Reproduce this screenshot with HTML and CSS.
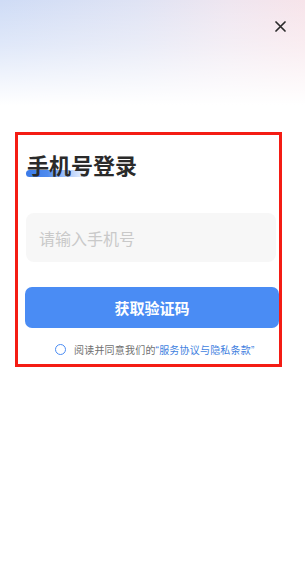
FILE: index.html
```html
<!DOCTYPE html>
<html lang="zh">
<head>
<meta charset="utf-8">
<link rel="stylesheet" href="styles.css">
</head>
<body>
<div class="page">
  <div class="top">
    <button class="close" aria-label="关闭">
      <svg width="11" height="11" viewBox="0 0 11 11"><path d="M1 1 L10 10 M10 1 L1 10" stroke="#2b2b2b" stroke-width="1.7" stroke-linecap="round"/></svg>
    </button>
  </div>
  <div class="box">
    <h1 class="title"><span class="title-text">手机号登录</span></h1>
    <div class="input">请输入手机号</div>
    <button class="btn">获取验证码</button>
    <div class="agree">
      <span class="radio"></span>
      <span class="agree-text">阅读并同意我们的<span class="link"><span class="q">“</span>服务协议与隐私条款<span class="q">”</span></span></span>
    </div>
  </div>
</div>
</body>
</html>
```
FILE: styles.css
```css
* { box-sizing: border-box; }
html, body { margin: 0; padding: 0; }
body {
  width: 305px;
  height: 566px;
  font-family: "Noto Sans CJK SC", "Noto Sans", sans-serif;
  background:
    linear-gradient(to bottom, rgba(255,255,255,0) 0px, rgba(255,255,255,0.35) 45px, #fff 105px),
    linear-gradient(to right, #cfdcf6 0%, #dfe3f4 45%, #efe6f0 75%, #f7e4ea 100%);
  background-size: 100% 120px, 100% 120px;
  background-repeat: no-repeat;
  background-color: #fff;
}
.top {
  height: 132px;
  display: flex;
  justify-content: flex-end;
  align-items: flex-start;
  padding: 21px 19px 0 0;
}
.close {
  border: 0;
  background: none;
  padding: 0;
  width: 11px;
  height: 11px;
  display: block;
}
.close svg { display: block; }
.box {
  margin: 0 23px 0 15px;
  border: 3px solid #f41c14;
  padding: 14px 0 8px 0;
}
.title {
  margin: 0 0 0 9px;
  font-size: 22px;
  line-height: 30px;
  font-weight: 700;
  color: #2a2a2a;
}
.title-text {
  position: relative;
  display: inline-block;
  z-index: 0;
}
.title-text::before {
  content: "";
  position: absolute;
  left: -1px;
  top: 21px;
  width: 62px;
  height: 7px;
  border-radius: 4px 1px 1px 4px;
  background: linear-gradient(to right, #3a7ae8 0%, #4f8bee 35%, rgba(130,172,246,0.6) 70%, rgba(220,232,252,0.2) 100%);
  z-index: -1;
}
.input {
  margin: 34px 3px 0 8px;
  height: 49px;
  background: #f7f7f7;
  border-radius: 8px;
  padding-left: 13px;
  display: flex;
  align-items: center;
  font-size: 16px;
  color: #c9c9c9;
}
.btn {
  display: block;
  margin: 25px 0 0 7px;
  width: calc(100% - 7px);
  height: 41px;
  border: 0;
  border-radius: 7px;
  background: #4a8cf4;
  color: #fff;
  font-family: inherit;
  font-size: 15px;
  font-weight: 700;
}
.agree {
  margin: 14px 0 0 37px;
  display: flex;
  align-items: center;
  height: 14px;
}
.radio {
  width: 11px;
  height: 11px;
  border: 1.3px solid #4a8cf4;
  border-radius: 50%;
  margin-right: 8px;
  flex: none;
}
.agree-text {
  font-size: 10px;
  color: #707070;
  white-space: nowrap;
  letter-spacing: 0.2px;
}
.link { color: #3f7fe0; }
.q { font-family: "Liberation Sans", sans-serif; }
```
